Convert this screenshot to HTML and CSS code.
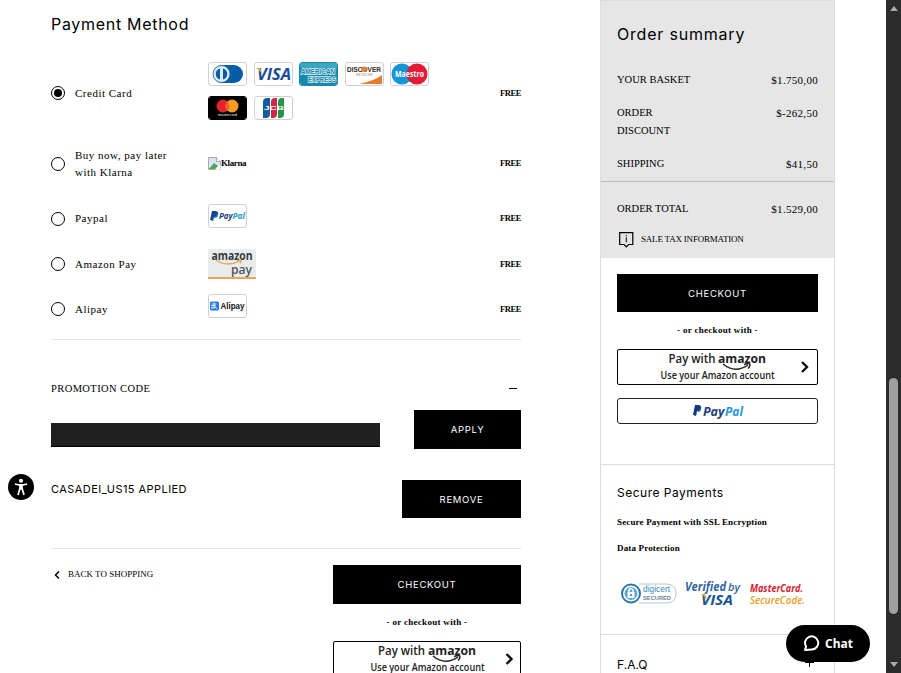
FILE: index.html
```
<!DOCTYPE html>
<html lang="en">
<head>
    <meta charset="utf-8">
    <title>Checkout</title>
    <link rel="stylesheet" href="styles.css">
</head>
<body>
    <div class="page">
        <main class="payment">
            <h1>Payment Method</h1>
            <div class="method credit">
                <span class="radio checked"></span>
                <span class="name">Credit Card</span>
                <div class="cards">
                    <svg class="card" viewBox="1 1 37 22"><rect x="5" y="3" width="30" height="18" rx="9" fill="#075ca8"/><circle cx="13.5" cy="12" r="8.5" fill="#dfeaf3" stroke="#075ca8" stroke-width=".7"/><path d="M12 6.5a5.7 5.7 0 0 0 0 11zM15 6.5a5.7 5.7 0 0 1 0 11z" fill="#075ca8"/></svg>
                    <svg class="card" viewBox="1 1 37 22"><text x="3" y="18" font-family="Open Sans" font-size="16" font-weight="bold" font-style="italic" fill="#1a4d98" textLength="34" lengthAdjust="spacingAndGlyphs">VISA</text><path d="M2 6h4l2 5z" fill="#e8b33b"/></svg>
                    <svg class="card amex" viewBox="1 1 37 22"><rect width="39" height="24" fill="#1789ad"/><rect width="39" height="6" fill="#3ba8c2"/><g font-family="Liberation Sans" font-size="7" font-weight="bold" fill="#1684aa" stroke="#e2f4f8" stroke-width="1.3" paint-order="stroke"><text x="2" y="12" textLength="34" lengthAdjust="spacingAndGlyphs">AMERICAN</text><text x="9" y="20" textLength="28" lengthAdjust="spacingAndGlyphs">EXPRESS</text></g></svg>
                    <svg class="card" viewBox="1 1 37 22"><text x="2" y="10" font-family="Liberation Sans" font-size="7.5" font-weight="bold" fill="#302724" textLength="34" lengthAdjust="spacingAndGlyphs">DISCOVER</text><circle cx="19" cy="7.3" r="2.8" fill="#e7803d"/><text x="11" y="13.5" font-family="Liberation Sans" font-size="3" fill="#c76b37" textLength="17">NETWORK</text><path d="M14 22Q29 19 37 13v9z" fill="#e77b2c"/></svg>
                    <svg class="card" viewBox="1 1 37 22"><circle cx="12" cy="12" r="10.5" fill="#1695d5"/><circle cx="27" cy="12" r="10.5" fill="#e31b36"/><text x="5" y="15.3" font-family="Open Sans" font-size="9" font-weight="bold" fill="#fff" textLength="29" lengthAdjust="spacingAndGlyphs">Maestro</text></svg>
                    <svg class="card dark" viewBox="1 1 37 22"><rect width="39" height="24" fill="#000"/><circle cx="15" cy="10" r="6.5" fill="#e5232b"/><circle cx="24" cy="10" r="6.5" fill="#f69b24"/><path d="M19.5 5.3a6.5 6.5 0 0 1 0 9.4 6.5 6.5 0 0 1 0-9.4" fill="#ee6229"/><text x="10" y="20" font-family="Liberation Sans" font-size="3.4" fill="#fff" textLength="19">mastercard</text></svg>
                    <svg class="card" viewBox="1 1 37 22"><path d="M9 22V6q0-4 4-4h3v16q0 4-4 4z" fill="#175ba2"/><path d="M17 22V6q0-4 4-4h2v16q0 4-4 4z" fill="#cf2948"/><path d="M24 22V6q0-4 4-4h2v16q0 4-4 4z" fill="#219549"/><text x="10" y="14.2" font-family="Liberation Sans" font-size="6" font-weight="bold" fill="#fff" textLength="20" lengthAdjust="spacingAndGlyphs">JCB</text></svg>
                </div>
                <span class="price">FREE</span>
            </div>
            <div class="method klarna">
                <span class="radio"></span>
                <span class="name">Buy now, pay later<br>with Klarna</span>
                <div class="missing">
                    <svg width="13" height="13" viewBox="0 0 13 13"><path d="M.5.5h8l4 4v8H.5z" fill="#d7e6f5" stroke="#aaa"/><path d="M8.5.5v4h4" fill="#fff" stroke="#aaa"/><path d="M1 12l5-6 4 3-3 3z" fill="#54a64a"/><path d="M7 12.8l5.5-5.5v5.5z" fill="#fff"/></svg>Klarna
                </div>
                <span class="price">FREE</span>
            </div>
            <div class="method paypal">
                <span class="radio"></span>
                <span class="name">Paypal</span>
                <svg class="card raised" viewBox="1 1 37 22"><path d="M4 7h4q3 1 2 4-1 2-4 2l-1 3H2z" fill="#16458f"/><path d="M10 9q1 5-4 5l-1 3H3" fill="#2478bd"/><text x="11" y="15.3" font-family="Open Sans" font-size="9" font-weight="bold" font-style="italic" fill="#183c7b" textLength="13.5" lengthAdjust="spacingAndGlyphs">Pay</text><text x="24.5" y="15.3" font-family="Open Sans" font-size="9" font-weight="bold" font-style="italic" fill="#299bcb" textLength="12.5" lengthAdjust="spacingAndGlyphs">Pal</text></svg>
                <span class="price">FREE</span>
            </div>
            <div class="method amazon">
                <span class="radio"></span>
                <span class="name">Amazon Pay</span>
                <svg width="48" height="30" viewBox="0 0 48 30"><rect width="48" height="30" fill="#e8eced"/><rect y="28" width="48" height="2" fill="#eda453"/><text x="3.5" y="11" font-family="Open Sans" font-size="12" font-weight="bold" fill="#333b40" textLength="41" lengthAdjust="spacingAndGlyphs">amazon</text><path d="M8 11.5q12 7 24 0M29 11.5h4l-1 3" fill="none" stroke="#eca14b" stroke-width="1.3"/><text x="23" y="25" font-family="Open Sans" font-size="13" font-weight="600" fill="#4f575b" textLength="21" lengthAdjust="spacingAndGlyphs">pay</text></svg>
                <span class="price">FREE</span>
            </div>
            <div class="method alipay">
                <span class="radio"></span>
                <span class="name">Alipay</span>
                <svg class="card raised" viewBox="1 1 37 22"><rect x="2" y="7.5" width="9" height="9" rx="1.5" fill="#2477e5"/><path d="M3.5 10h5M6 8.5v3M3.5 11.5h4q-1 3-3 3-2-.5-1-1.5 2-.5 6 1.5" fill="none" stroke="#fff" stroke-width=".8"/><text x="12.5" y="15" font-family="Liberation Sans" font-size="9" font-weight="bold" fill="#111" textLength="24" lengthAdjust="spacingAndGlyphs">Alipay</text></svg>
                <span class="price">FREE</span>
            </div>

            <section class="promo">
                <div class="promo-title"><span>PROMOTION CODE</span><span class="minus"></span></div>
                <div class="promo-form">
                    <input type="text" aria-label="Promotion code">
                    <button class="apply">APPLY</button>
                </div>
                <div class="coupon"><span>CASADEI_US15 APPLIED</span><button class="remove">REMOVE</button></div>
            </section>

            <div class="actions">
                <a class="back"><svg width="6" height="8" viewBox="0 0 6 8"><path d="M5 .5L1.5 4 5 7.5" fill="none" stroke="#000" stroke-width="1.5"/></svg>BACK TO SHOPPING</a>
                <div class="action-buttons">
                    <button>CHECKOUT</button>
                    <p class="or">- or checkout with -</p>
                    <div class="amazon-button">
                        <svg width="188" height="36" viewBox="0 0 188 36"><g font-family="Open Sans" fill="#222"><text x="45" y="14" font-size="12" font-weight="600" textLength="47" lengthAdjust="spacingAndGlyphs">Pay with</text><text x="95" y="14" font-size="13" font-weight="bold" textLength="48" lengthAdjust="spacingAndGlyphs">amazon</text><text x="37.5" y="30" font-size="10.5" font-weight="600" textLength="114" lengthAdjust="spacingAndGlyphs">Use your Amazon account</text></g><path d="M100 15q12 10 25 1M121 15.5q6-2 6 0 0 2-2 4" fill="none" stroke="#222" stroke-width="1.5"/><path d="M173.5 13l5 5-5 5" fill="none" stroke="#111" stroke-width="2.4"/></svg>
                    </div>
                </div>
            </div>
        </main>

        <aside class="summary">
            <div class="totals">
                <h2>Order summary</h2>
                <div class="line"><span>YOUR BASKET</span><span>$1.750,00</span></div>
                <div class="line"><span>ORDER<br>DISCOUNT</span><span>$-262,50</span></div>
                <div class="line shipping"><span>SHIPPING</span><span>$41,50</span></div>
                <div class="line total"><span>ORDER TOTAL</span><span>$1.529,00</span></div>
                <div class="tax"><svg width="15" height="16" viewBox="0 0 15 16"><path d="M.7.7h13.1v11.8H9.5l-2.2 2.3-2.2-2.3H.7z" fill="none" stroke="#000" stroke-width="1.2"/><path d="M7.3 3v1.3M7.3 5.3v5" stroke="#000"/></svg>SALE TAX INFORMATION</div>
            </div>
            <div class="side-buttons">
                <button>CHECKOUT</button>
                <p class="or">- or checkout with -</p>
                <div class="amazon-button">
                    <svg width="201" height="36" viewBox="0 0 201 36"><g font-family="Open Sans" fill="#222"><text x="51.5" y="14" font-size="12" font-weight="600" textLength="47" lengthAdjust="spacingAndGlyphs">Pay with</text><text x="101" y="14" font-size="13" font-weight="bold" textLength="48" lengthAdjust="spacingAndGlyphs">amazon</text><text x="43.5" y="30" font-size="10.5" font-weight="600" textLength="114" lengthAdjust="spacingAndGlyphs">Use your Amazon account</text></g><path d="M106 15q12 10 25 1M127 15.5q6-2 6 0 0 2-2 4" fill="none" stroke="#222" stroke-width="1.5"/><path d="M185 13l5 5-5 5" fill="none" stroke="#111" stroke-width="2.4"/></svg>
                </div>
                <div class="paypal-button">
                    <svg width="52" height="18" viewBox="0 0 52 18"><path d="M3 3h4q3 1 2 4-1 2-4 2l-1 4H1z" fill="#16377d"/><path d="M9 5q1 5-4 5l-1 4H2" fill="#1762a9"/><text x="11" y="13.5" font-family="Open Sans" font-size="11.5" font-weight="bold" font-style="italic" fill="#223f7c" textLength="21.5" lengthAdjust="spacingAndGlyphs">Pay</text><text x="33" y="13.5" font-family="Open Sans" font-size="11.5" font-weight="bold" font-style="italic" fill="#2997dc" textLength="18" lengthAdjust="spacingAndGlyphs">Pal</text></svg>
                </div>
            </div>
            <section class="secure">
                <h3>Secure Payments</h3>
                <p>Secure Payment with SSL Encryption</p>
                <p>Data Protection</p>
                <svg width="190" height="32" viewBox="0 0 190 32"><path d="M22 5h28q9 1 9 9 0 10-9 10H22" fill="#fff" stroke="#b8c5d0"/><circle cx="14" cy="14.5" r="9" fill="#fff" stroke="#2a76ae" stroke-width="2"/><circle cx="14" cy="14.5" r="6.5" fill="#5da7d3"/><rect x="10.5" y="13" width="7" height="6" fill="#fff"/><path d="M12 13v-2q2-3 4 0v2" fill="none" stroke="#fff" stroke-width="1.5"/><circle cx="14" cy="16" r="1" fill="#2a76ae"/><text x="26" y="13" font-family="Liberation Sans" font-size="8.5" fill="#338bbd" textLength="27" lengthAdjust="spacingAndGlyphs">digicert</text><text x="26" y="21" font-family="Liberation Sans" font-size="6" font-weight="bold" fill="#6e8394" textLength="28" lengthAdjust="spacingAndGlyphs">SECURED</text><g font-family="Open Sans" font-weight="bold" font-style="italic"><text x="68" y="12" font-size="12" fill="#31649e" textLength="41" lengthAdjust="spacingAndGlyphs">Verified</text><text x="111" y="12" font-size="11" font-weight="600" fill="#31649e" textLength="12" lengthAdjust="spacingAndGlyphs">by</text><text x="84" y="25.5" font-size="14.5" fill="#195594" textLength="32" lengthAdjust="spacingAndGlyphs">VISA</text><path d="M84 15h4l2 5z" fill="#eaa431"/><text x="133" y="13" font-size="10.5" fill="#d91c2f" textLength="53" lengthAdjust="spacingAndGlyphs">MasterCard.</text><text x="133" y="24.5" font-size="10.5" font-weight="600" fill="#ed9b27" textLength="55" lengthAdjust="spacingAndGlyphs">SecureCode.</text></g></svg>
            </section>
            <div class="faq"><span>F.A.Q</span><i></i></div>
        </aside>
    </div>

    <div class="accessibility"><svg width="26" height="26" viewBox="0 0 26 26"><circle cx="13" cy="13" r="13"/><circle cx="13" cy="6.8" r="2" fill="#fff"/><path d="M7 10l4 1h4l4-1M12 11h2v4h-2zM12 14l-2 7M14 14l2 7" fill="#fff" stroke="#fff" stroke-width="1.7"/></svg></div>
    <div class="chat"><svg width="17" height="17" viewBox="0 0 17 17"><path d="M2 15l1.1-3.5A6.6 6.6 0 1 1 9 14.5z" fill="none" stroke="#fff" stroke-width="2" stroke-linejoin="round"/></svg>Chat</div>
    <div class="scrollbar"><i class="up"></i><i class="thumb"></i><i class="down"></i></div>
</body>
</html>
```
FILE: styles.css
```
* {
    box-sizing: border-box;
}

body {
    margin: 0;
    height: 673px;
    overflow: hidden;
    background: #fff;
    color: #000;
    font: 11px/17px "Liberation Serif", serif;
    letter-spacing: 0.5px;
}

svg {
    letter-spacing: 0;
}

.page {
    display: flex;
    padding-left: 51px;
    height: 673px;
}

.payment {
    width: 470px;
    margin-right: 79px;
}

h1, h2, h3 {
    margin: 0;
    font-family: Inter, sans-serif;
    font-weight: normal;
}

h1 {
    height: 53px;
    padding-top: 14px;
    font-size: 16px;
    line-height: 20px;
    letter-spacing: 0.7px;
}

.method {
    display: grid;
    grid-template-columns: 24px 133px 1fr auto;
    align-items: center;
}

.credit {
    height: 80px;
}

.klarna {
    height: 61px;
}

.paypal {
    height: 49px;
}

.amazon {
    height: 42px;
}

.alipay {
    height: 48px;
}

.radio {
    width: 14px;
    height: 14px;
    border: 1px solid #000;
    border-radius: 50%;
}

.checked {
    background: #000;
    background-clip: content-box;
    padding: 2px;
}

.cards {
    display: flex;
    flex-wrap: wrap;
    gap: 10px 6.5px;
    width: 225px;
    margin-bottom: 4px;
}

.card {
    width: 39px;
    height: 24px;
    border: 1px solid #d0d0d0;
    border-radius: 3px;
}

.amex {
    border-color: #1789ad;
}

.dark {
    border-color: #000;
}

.raised {
    margin-bottom: 6px;
}

.price {
    font-size: 8.5px;
    font-weight: bold;
    letter-spacing: -0.4px;
}

.missing {
    display: flex;
    align-items: center;
    font-size: 9px;
    font-weight: bold;
    letter-spacing: -0.4px;
}

.promo {
    height: 210px;
    margin-top: 6px;
    padding-top: 40px;
    border-top: 1px solid #e5e5e5;
    border-bottom: 1px solid #e5e5e5;
}

.promo-title {
    display: flex;
    justify-content: space-between;
    align-items: center;
    height: 17px;
    padding-right: 4px;
    font-size: 10.5px;
    letter-spacing: 0.4px;
}

.minus {
    width: 8px;
    height: 1px;
    background: #000;
}

.promo-form {
    display: flex;
    justify-content: space-between;
    align-items: flex-end;
    margin-top: 13px;
}

input {
    width: 329px;
    height: 24px;
    margin-bottom: 2px;
    padding: 0;
    background: #202020;
    border: 0;
    border-bottom: 1px solid #000;
}

button {
    display: block;
    width: 100%;
    height: 38px;
    padding: 0;
    border: 0;
    background: #000;
    color: #fff;
    font: 9.5px Inter, sans-serif;
    letter-spacing: 0.7px;
}

.apply {
    width: 107px;
    height: 39px;
}

.remove {
    width: 119px;
}

.coupon {
    display: flex;
    justify-content: space-between;
    margin-top: 31px;
    font: 11px/19px Inter, sans-serif;
    letter-spacing: 0.45px;
}

.actions {
    display: flex;
    justify-content: space-between;
    padding-top: 16px;
}

.back {
    display: flex;
    gap: 8px;
    align-items: center;
    height: 19px;
    padding-left: 3px;
    font-size: 9px;
    letter-spacing: 0;
}

.action-buttons {
    width: 188px;
}

.action-buttons button {
    height: 39px;
}

.or {
    margin: 10px 0 11px;
    height: 16px;
    font-size: 9px;
    line-height: 16px;
    font-weight: bold;
    letter-spacing: 0.3px;
    text-align: center;
}

.amazon-button {
    height: 36px;
    border: 1px solid #000;
    border-radius: 2px;
}

.amazon-button svg {
    display: block;
    margin: -1px;
}

.summary {
    width: 235px;
    border: solid #ddd;
    border-width: 0 1px;
}

.totals {
    height: 258px;
    padding: 24px 16px 0;
    background: #e6e6e6;
    border-top: 1px solid #ddd;
}

h2 {
    margin-bottom: 28px;
    font-size: 16px;
    line-height: 18px;
    letter-spacing: 0.8px;
}

.line {
    display: flex;
    justify-content: space-between;
    margin-bottom: 15px;
    font-size: 10.5px;
    line-height: 18px;
    letter-spacing: 0;
}

.line span:last-child {
    font-size: 11px;
    letter-spacing: 0.3px;
}

.shipping {
    margin-bottom: 8px;
}

.total {
    margin: 0 -16px 13px;
    padding: 18px 16px 0;
    border-top: 1px solid #bbb;
}

.tax {
    display: flex;
    align-items: center;
    gap: 7px;
    padding-left: 2px;
    font-size: 9px;
    letter-spacing: -0.2px;
}

.side-buttons {
    height: 206px;
    padding: 16px 16px 0;
}

.paypal-button {
    display: flex;
    justify-content: center;
    align-items: center;
    height: 26px;
    margin-top: 13px;
    border: 1px solid #222;
    border-radius: 3px;
}

.secure {
    height: 170px;
    padding: 19px 16px 0;
    border-top: 1px solid #ddd;
}

h3 {
    margin-bottom: 12px;
    font-size: 12px;
    line-height: 18px;
    letter-spacing: 0.5px;
}

.secure p {
    margin: 0 0 9px;
    font-size: 9px;
    line-height: 17px;
    font-weight: bold;
    letter-spacing: 0.15px;
}

.secure svg {
    display: block;
    margin-top: 22px;
}

.faq {
    display: flex;
    justify-content: space-between;
    padding: 20px 20px 0 16px;
    border-top: 1px solid #ddd;
    font: 12px/20px Inter, sans-serif;
    letter-spacing: 0;
}

.faq i {
    width: 9px;
    height: 9px;
    margin-top: 3px;
    background: linear-gradient(#000, #000) center / 1px 9px no-repeat, linear-gradient(#000, #000) center / 9px 1px no-repeat;
}

.accessibility {
    position: fixed;
    left: 8px;
    top: 474px;
}

.accessibility svg {
    display: block;
}

.chat {
    position: fixed;
    right: 31px;
    bottom: 11px;
    display: flex;
    align-items: center;
    gap: 5px;
    width: 84px;
    height: 37px;
    padding-left: 17px;
    border-radius: 19px;
    background: #000;
    color: #fff;
    font: bold 12px "Noto Sans", sans-serif;
    letter-spacing: 0;
}

.scrollbar {
    position: fixed;
    right: 0;
    top: 0;
    display: flex;
    flex-direction: column;
    align-items: center;
    width: 15px;
    height: 673px;
    padding: 6px 0;
    background: #2b2b2b;
}

.up {
    border: 4px solid transparent;
    border-top: 0;
    border-bottom: 5px solid #aaa;
}

.thumb {
    width: 9px;
    height: 236px;
    margin-top: 367px;
    border-radius: 5px;
    background: #9f9f9f;
}

.down {
    margin-top: auto;
    border: 4px solid transparent;
    border-bottom: 0;
    border-top: 5px solid #aaa;
}
```
